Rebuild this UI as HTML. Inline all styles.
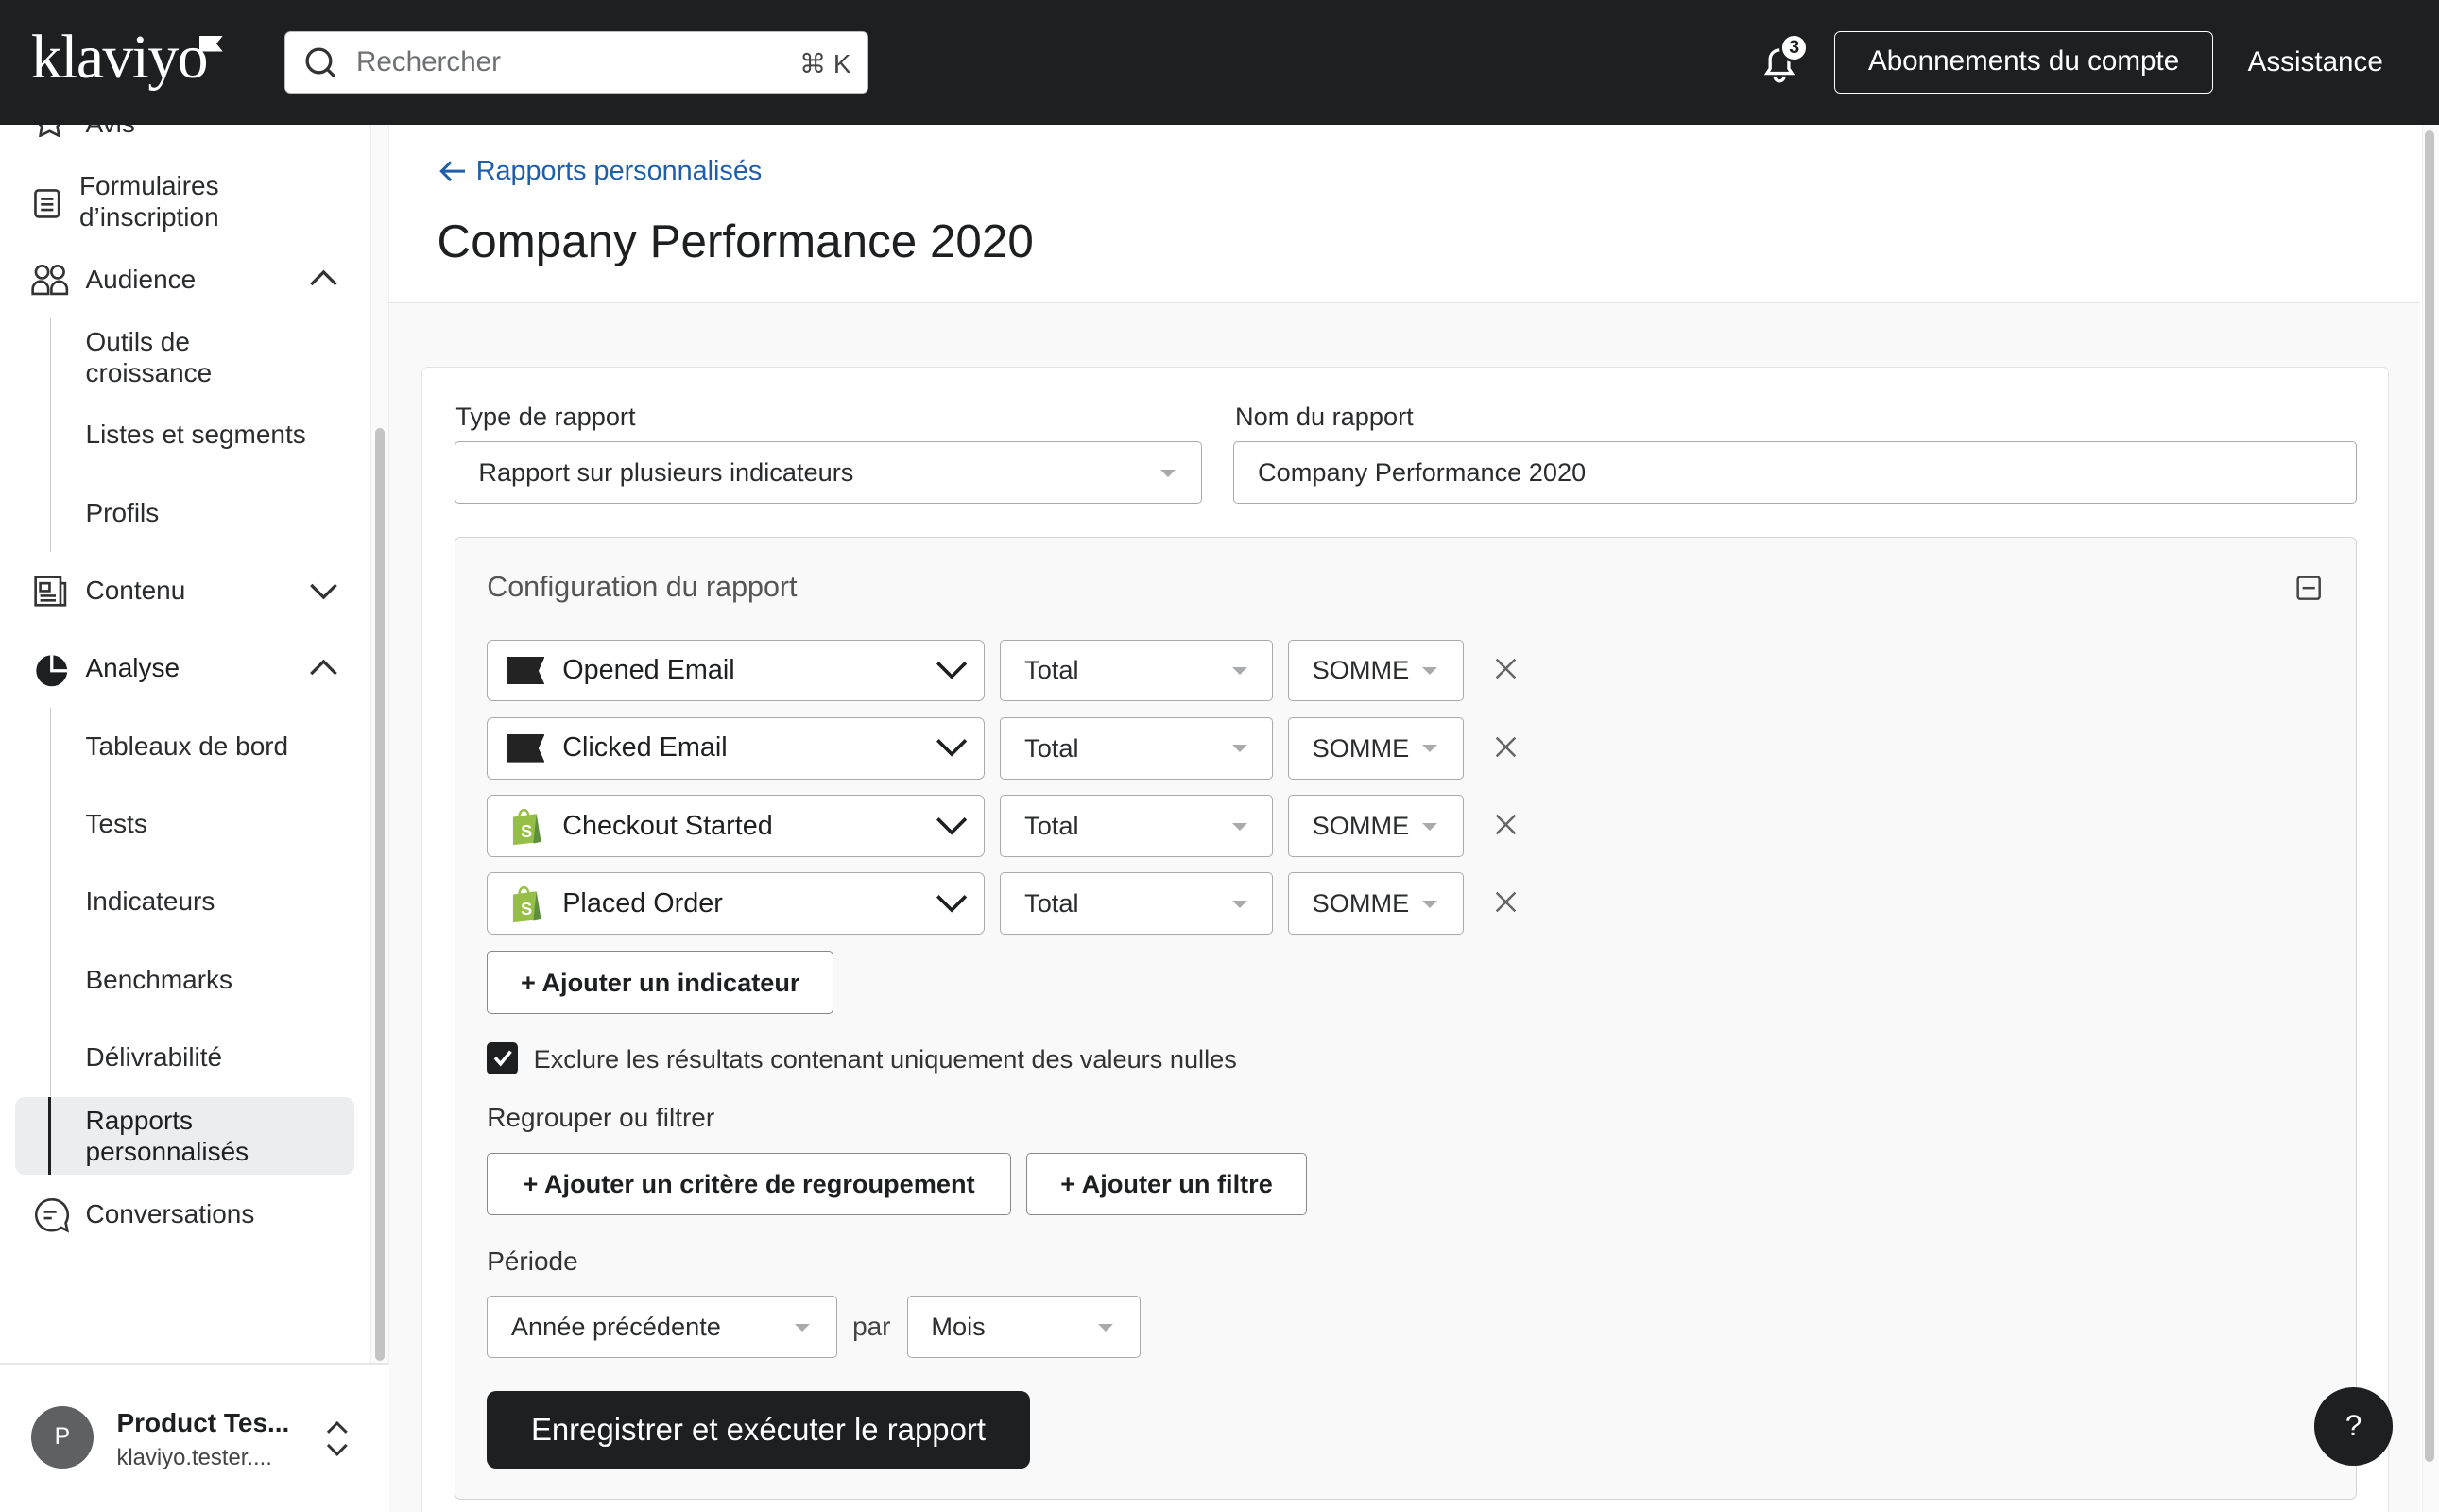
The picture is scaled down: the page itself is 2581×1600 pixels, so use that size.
<!DOCTYPE html>
<html><head><meta charset="utf-8"><style>
*{box-sizing:border-box;margin:0;padding:0}
html,body{width:2581px;height:1600px;overflow:hidden;background:#fff}
#z{zoom:1.6461;width:1568px;height:972px;position:relative;font-family:"Liberation Sans",sans-serif;color:#1e1f20;overflow:hidden}
.a{position:absolute}
.nav{font-size:17px;color:#2b2c2e}
.box{position:absolute;border:1px solid #a9aaab;border-radius:3px;background:#fff;font-size:16.5px;color:#2b2c2e;display:flex;align-items:center;padding-left:15px}
.tri{position:absolute;width:0;height:0;border-left:5px solid transparent;border-right:5px solid transparent;border-top:5px solid #a9aaab}
.btn{position:absolute;border:1px solid #888;border-radius:3px;background:#fff;font-size:16.5px;font-weight:bold;display:flex;align-items:center;justify-content:center}
.chev{position:absolute}
#hdr{position:absolute;left:0;top:0;width:1568px;height:80px;background:#1e1f20;z-index:10}
</style></head><body><div id="z">

<!-- sidebar -->
<div class="a" style="left:238px;top:80px;width:12px;height:796px;background:#fafafa;border-left:1px solid #eee;border-right:1px solid #eee"></div>
<div class="a" style="left:241px;top:275px;width:6px;height:600px;background:#c4c4c4;border-radius:3px"></div>
<div class="a nav" style="left:55px;top:70px">Avis</div>
<svg class="a" style="left:22px;top:72px" width="20" height="16"><path d="M10 -2l3 6 6 1-4 4 1 6-6-3-6 3 1-6-4-4 6-1z" fill="none" stroke="#333" stroke-width="1.6"/></svg>
<svg class="a" style="left:21px;top:121px" width="18" height="20"><rect x="1.5" y="1.5" width="15" height="17" rx="2" fill="none" stroke="#333" stroke-width="1.6"/><path d="M5 7h8M5 10.5h8M5 14h8" stroke="#333" stroke-width="1.6"/></svg>
<div class="a nav" style="left:51px;top:110px;line-height:20px">Formulaires<br>d’inscription</div>
<svg class="a" style="left:20px;top:169px" width="26" height="22"><circle cx="7" cy="6" r="4" fill="none" stroke="#333" stroke-width="1.6"/><circle cx="17" cy="6" r="4" fill="none" stroke="#333" stroke-width="1.6"/><path d="M1 20v-3a5 5 0 0 1 10 0v3zM13 20v-3a5 5 0 0 1 10 0v3z" fill="none" stroke="#333" stroke-width="1.6"/></svg>
<div class="a nav" style="left:55px;top:170px">Audience</div>
<svg class="chev" style="left:198px;top:172px" width="20" height="14"><path d="M2 11l8-8 8 8" fill="none" stroke="#333" stroke-width="2"/></svg>
<div class="a" style="left:32px;top:205px;width:1px;height:150px;background:#ccc"></div>
<div class="a nav" style="left:55px;top:210px;line-height:20px">Outils de<br>croissance</div>
<div class="a nav" style="left:55px;top:270px">Listes et segments</div>
<div class="a nav" style="left:55px;top:320px">Profils</div>
<svg class="a" style="left:22px;top:370px" width="22" height="20"><rect x="1" y="1" width="16" height="18" fill="none" stroke="#333" stroke-width="1.6"/><path d="M17 5h3v14h-3M4 5h6v5H4zM4 13h10M4 16h10" fill="none" stroke="#333" stroke-width="1.6"/></svg>
<div class="a nav" style="left:55px;top:370px">Contenu</div>
<svg class="chev" style="left:198px;top:373px" width="20" height="14"><path d="M2 3l8 8 8-8" fill="none" stroke="#333" stroke-width="2"/></svg>
<svg class="a" style="left:21px;top:419px" width="24" height="24"><circle cx="12" cy="12" r="10" fill="#1e1f20"/><path d="M12 2v10h10" fill="none" stroke="#fff" stroke-width="2"/></svg>
<div class="a nav" style="left:55px;top:420px;color:#1e1f20">Analyse</div>
<svg class="chev" style="left:198px;top:422px" width="20" height="14"><path d="M2 11l8-8 8 8" fill="none" stroke="#333" stroke-width="2"/></svg>
<div class="a" style="left:32px;top:455px;width:1px;height:250px;background:#ccc"></div>
<div class="a nav" style="left:55px;top:470px">Tableaux de bord</div>
<div class="a nav" style="left:55px;top:520px">Tests</div>
<div class="a nav" style="left:55px;top:570px">Indicateurs</div>
<div class="a nav" style="left:55px;top:620px">Benchmarks</div>
<div class="a nav" style="left:55px;top:670px">Délivrabilité</div>
<div class="a" style="left:10px;top:705px;width:218px;height:50px;background:#ecedee;border-radius:6px"></div>
<div class="a" style="left:31px;top:705px;width:2px;height:50px;background:#1e1f20"></div>
<div class="a nav" style="left:55px;top:711px;line-height:20px;color:#1e1f20">Rapports<br>personnalisés</div>
<svg class="a" style="left:21px;top:769px" width="24" height="24"><path d="M12 2a10 10 0 1 0 6 18l4 2-1-5A10 10 0 0 0 12 2z" fill="none" stroke="#333" stroke-width="1.6"/><path d="M7 10h8M7 14h5" stroke="#333" stroke-width="1.6"/></svg>
<div class="a nav" style="left:55px;top:771px">Conversations</div>
<div class="a" style="left:0;top:876px;width:250px;height:1px;background:#e6e6e6"></div>
<div class="a" style="left:20px;top:904px;width:40px;height:40px;border-radius:50%;background:#5f6062;color:#fff;font-size:15px;text-align:center;line-height:40px">P</div>
<div class="a" style="left:75px;top:905px;font-size:17px;font-weight:bold">Product Tes...</div>
<div class="a" style="left:75px;top:929px;font-size:14.5px;color:#444">klaviyo.tester....</div>
<svg class="a" style="left:208px;top:912px" width="18" height="26"><path d="M3 9l6-6 6 6M3 17l6 6 6-6" fill="none" stroke="#333" stroke-width="1.8"/></svg>

<!-- main -->
<div class="a" style="left:250px;top:80px;width:1306px;height:892px;background:#f9f9f9"></div>
<div class="a" style="left:250px;top:80px;width:1306px;height:115px;background:#fff;border-bottom:1px solid #e6e6e6"></div>
<div class="a" style="left:1557px;top:80px;width:11px;height:892px;background:#fafafa;border-left:1px solid #eee"></div>
<div class="a" style="left:1559px;top:84px;width:6px;height:856px;background:#c4c4c4;border-radius:3px"></div>
<svg class="a" style="left:282px;top:102px" width="18" height="16"><path d="M17 8H2M8 2L2 8l6 6" fill="none" stroke="#1f5ea8" stroke-width="1.8"/></svg>
<div class="a" style="left:306px;top:100px;font-size:17.5px;color:#1f5ea8">Rapports personnalisés</div>
<div class="a" style="left:281px;top:138px;font-size:30px;color:#1e1f20">Company Performance 2020</div>

<div class="a" style="left:271px;top:236px;width:1265px;height:760px;background:#fff;border:1px solid #e4e4e4;border-radius:4px"></div>
<div class="a" style="left:293px;top:258px;font-size:16.5px;color:#2b2c2e">Type de rapport</div>
<div class="a" style="left:794px;top:258px;font-size:16.5px;color:#2b2c2e">Nom du rapport</div>
<div class="box" style="left:292px;top:284px;width:481px;height:40px">Rapport sur plusieurs indicateurs</div>
<div class="tri" style="left:746px;top:302px"></div>
<div class="box" style="left:793px;top:284px;width:722px;height:40px">Company Performance 2020</div>

<div class="a" style="left:292px;top:345px;width:1223px;height:619px;border:1px solid #d4d4d4;border-radius:4px;background:#f9f9f9"></div>
<div class="a" style="left:313px;top:367px;font-size:18.5px;color:#555">Configuration du rapport</div>
<svg class="a" style="left:1476px;top:370px" width="16" height="16"><rect x="1" y="1" width="14" height="14" rx="1.5" fill="none" stroke="#444" stroke-width="1.5"/><path d="M4 8h8" stroke="#444" stroke-width="1.5"/></svg>

<div class="box" style="left:313px;top:411px;width:320px;height:40px;border-radius:4px;padding-left:48px;font-size:17.5px;color:#1e1f20">Opened Email</div>
<div class="box" style="left:313px;top:461px;width:320px;height:40px;border-radius:4px;padding-left:48px;font-size:17.5px;color:#1e1f20">Clicked Email</div>
<div class="box" style="left:313px;top:511px;width:320px;height:40px;border-radius:4px;padding-left:48px;font-size:17.5px;color:#1e1f20">Checkout Started</div>
<div class="box" style="left:313px;top:561px;width:320px;height:40px;border-radius:4px;padding-left:48px;font-size:17.5px;color:#1e1f20">Placed Order</div>
<svg class="a" style="left:326px;top:422px" width="24" height="18"><path d="M0 0H24L20 9L24 18H0Z" fill="#232323"/></svg>
<svg class="a" style="left:326px;top:472px" width="24" height="18"><path d="M0 0H24L20 9L24 18H0Z" fill="#232323"/></svg>
<svg class="a" style="left:327px;top:518px" width="22" height="26"><path d="M3 7l15-2 3 18-18 2z" fill="#95bf47"/><path d="M7 7c0-6 6-6 6 0" fill="none" stroke="#95bf47" stroke-width="1.5"/><path d="M18 5l3 18-5 1z" fill="#5e8e3e"/><text x="8" y="20" font-size="11" font-weight="bold" fill="#fff" font-family="Liberation Sans">S</text></svg>
<svg class="a" style="left:327px;top:568px" width="22" height="26"><path d="M3 7l15-2 3 18-18 2z" fill="#95bf47"/><path d="M7 7c0-6 6-6 6 0" fill="none" stroke="#95bf47" stroke-width="1.5"/><path d="M18 5l3 18-5 1z" fill="#5e8e3e"/><text x="8" y="20" font-size="11" font-weight="bold" fill="#fff" font-family="Liberation Sans">S</text></svg>
<svg class="a" style="left:601px;top:424px" width="22" height="14"><path d="M2 2l9 9 9-9" fill="none" stroke="#1e1f20" stroke-width="2.2"/></svg>
<svg class="a" style="left:601px;top:474px" width="22" height="14"><path d="M2 2l9 9 9-9" fill="none" stroke="#1e1f20" stroke-width="2.2"/></svg>
<svg class="a" style="left:601px;top:524px" width="22" height="14"><path d="M2 2l9 9 9-9" fill="none" stroke="#1e1f20" stroke-width="2.2"/></svg>
<svg class="a" style="left:601px;top:574px" width="22" height="14"><path d="M2 2l9 9 9-9" fill="none" stroke="#1e1f20" stroke-width="2.2"/></svg>

<div class="box" style="left:643px;top:411px;width:175px;height:40px">Total</div><div class="tri" style="left:792px;top:429px"></div>
<div class="box" style="left:643px;top:461px;width:175px;height:40px">Total</div><div class="tri" style="left:792px;top:479px"></div>
<div class="box" style="left:643px;top:511px;width:175px;height:40px">Total</div><div class="tri" style="left:792px;top:529px"></div>
<div class="box" style="left:643px;top:561px;width:175px;height:40px">Total</div><div class="tri" style="left:792px;top:579px"></div>
<div class="box" style="left:828px;top:411px;width:113px;height:40px">SOMME</div><div class="tri" style="left:914px;top:429px"></div>
<div class="box" style="left:828px;top:461px;width:113px;height:40px">SOMME</div><div class="tri" style="left:914px;top:479px"></div>
<div class="box" style="left:828px;top:511px;width:113px;height:40px">SOMME</div><div class="tri" style="left:914px;top:529px"></div>
<div class="box" style="left:828px;top:561px;width:113px;height:40px">SOMME</div><div class="tri" style="left:914px;top:579px"></div>
<svg class="a" style="left:961px;top:423px" width="14" height="14"><path d="M1 1l12 12M13 1L1 13" stroke="#666" stroke-width="1.5"/></svg>
<svg class="a" style="left:961px;top:473px" width="14" height="14"><path d="M1 1l12 12M13 1L1 13" stroke="#666" stroke-width="1.5"/></svg>
<svg class="a" style="left:961px;top:523px" width="14" height="14"><path d="M1 1l12 12M13 1L1 13" stroke="#666" stroke-width="1.5"/></svg>
<svg class="a" style="left:961px;top:573px" width="14" height="14"><path d="M1 1l12 12M13 1L1 13" stroke="#666" stroke-width="1.5"/></svg>

<div class="btn" style="left:313px;top:611px;width:223px;height:41px">+ Ajouter un indicateur</div>
<div class="a" style="left:313px;top:670px;width:20px;height:21px;background:#1e1f20;border-radius:3px"></div>
<svg class="a" style="left:315px;top:672px" width="16" height="16"><path d="M3 8l3.5 4L13 4" fill="none" stroke="#fff" stroke-width="2.2"/></svg>
<div class="a" style="left:343px;top:671px;font-size:16.5px;color:#333">Exclure les résultats contenant uniquement des valeurs nulles</div>
<div class="a" style="left:313px;top:709px;font-size:17px;color:#333">Regrouper ou filtrer</div>
<div class="btn" style="left:313px;top:741px;width:337px;height:40px">+ Ajouter un critère de regroupement</div>
<div class="btn" style="left:660px;top:741px;width:180px;height:40px">+ Ajouter un filtre</div>
<div class="a" style="left:313px;top:801px;font-size:17px;color:#333">Période</div>
<div class="box" style="left:313px;top:833px;width:225px;height:40px">Année précédente</div><div class="tri" style="left:511px;top:851px"></div>
<div class="a" style="left:548px;top:843px;font-size:17px;color:#444">par</div>
<div class="box" style="left:583px;top:833px;width:150px;height:40px">Mois</div><div class="tri" style="left:706px;top:851px"></div>
<div class="a" style="left:313px;top:894px;width:349px;height:50px;background:#1e1f20;border-radius:6px;color:#fff;font-size:20px;text-align:center;line-height:50px">Enregistrer et exécuter le rapport</div>
<div class="a" style="left:1488px;top:892px;width:50px;height:50px;border-radius:50%;background:#1e1f20;color:#fff;font-size:19px;text-align:center;line-height:50px">?</div>

<!-- header -->
<div id="hdr">
<div class="a" style="left:20px;top:14px;font-family:'Liberation Serif',serif;color:#fff;font-size:40px;letter-spacing:-1px">klaviyo</div>
<svg class="a" style="left:128px;top:23px" width="16" height="12"><path d="M0 0H15L11 5L15 10H0Z" fill="#fff"/></svg>
<div class="a" style="left:183px;top:20px;width:375px;height:40px;background:#fff;border-radius:4px;border:1px solid #bbb"></div>
<svg class="a" style="left:195px;top:29px" width="24" height="24"><circle cx="10" cy="10" r="7.5" fill="none" stroke="#333" stroke-width="2"/><path d="M15 15l5 5" stroke="#333" stroke-width="2"/></svg>
<div class="a" style="left:229px;top:30px;font-size:18px;color:#6f7072">Rechercher</div>
<div class="a" style="left:514px;top:31px;font-size:17px;color:#444">⌘ K</div>
<svg class="a" style="left:1130px;top:26px" width="30" height="30"><path d="M6 21h16l-2-3v-6a6 6 0 0 0-12 0v6z M11 23a3 3 0 0 0 6 0" fill="none" stroke="#fff" stroke-width="2"/></svg>
<div class="a" style="left:1144px;top:21px;width:19px;height:19px;border-radius:50%;background:#fff;border:2px solid #1e1f20;font-size:12px;font-weight:bold;text-align:center;line-height:15px">3</div>
<div class="a" style="left:1179px;top:20px;width:244px;height:40px;border:1px solid #fff;border-radius:4px;color:#fff;font-size:18px;text-align:center;line-height:38px">Abonnements du compte</div>
<div class="a" style="left:1445px;top:30px;color:#fff;font-size:18px">Assistance</div>
</div>
</div></body></html>
